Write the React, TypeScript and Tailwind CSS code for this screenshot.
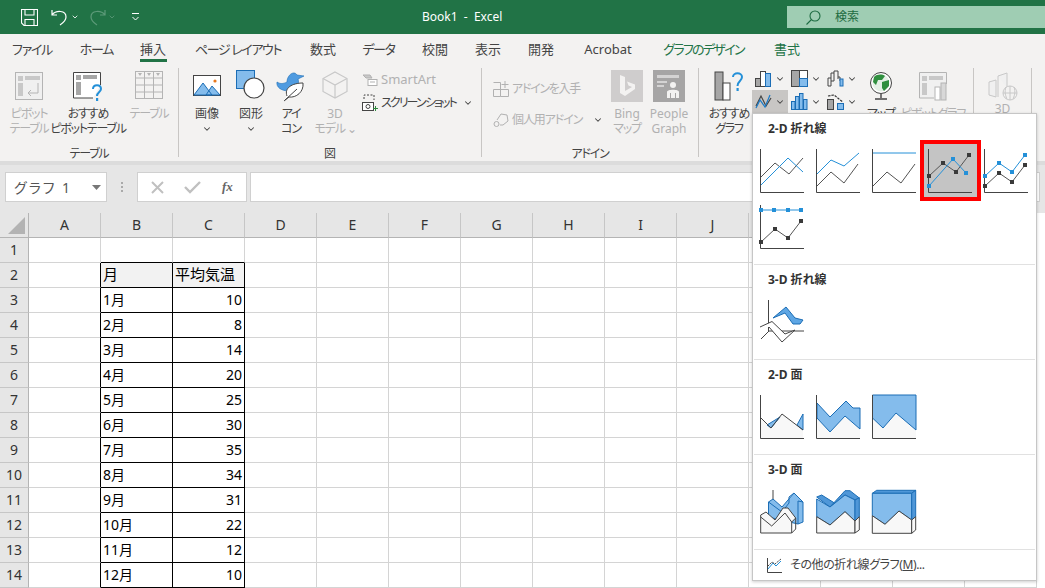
import type { ReactNode } from "react";
import { ChevronDown } from "lucide-react";

const tabs = [
  { label: "ファイル", cls: "w-[64px] text-[#444] tracking-[-1.3px]" },
  { label: "ホーム", cls: "w-[65px] text-[#444] tracking-[-1.3px]" },
  { label: "挿入", cls: "w-[48px] text-[#444]" },
  { label: "ページ レイアウト", cls: "w-[122px] text-[#444] tracking-[-1.4px]" },
  { label: "数式", cls: "w-[48px] text-[#444]" },
  { label: "データ", cls: "w-[63px] text-[#444] tracking-[-1.3px]" },
  { label: "校閲", cls: "w-[50px] text-[#444]" },
  { label: "表示", cls: "w-[56px] text-[#444]" },
  { label: "開発", cls: "w-[50px] text-[#444]" },
  { label: "Acrobat", cls: "w-[84px] text-[#444]" },
  { label: "グラフのデザイン", cls: "w-[107px] text-[#217346] tracking-[-1.7px]" },
  { label: "書式", cls: "w-[60px] text-[#217346]" },
];

const BLUE = "#2490d8";
const DARK = "#444444";
const AREA = "#84bcec";
const EDGE = "#1b6db5";
const LIGHT = "#f8f8f8";

// kana is much narrower in the original UI font
const kana = /[ぁ-んァ-ヶ]/;

function Chev({ className = "" }: { className?: string }) {
  return <ChevronDown size={10} strokeWidth={2.5} className={`shrink-0 ${className}`} />;
}

function Mini({ children, w = 48, h = 48 }: { children: ReactNode; w?: number; h?: number }) {
  return (
    <svg width={w} height={h} viewBox={`0 0 ${w} ${h}`} fill="none" className="block shrink-0">
      {children}
    </svg>
  );
}

function Axis() {
  return <path d="M2.5 2V45.5H46" stroke={DARK} strokeWidth="1" />;
}

function Line({ p, c }: { p: string; c: string }) {
  return <polyline points={p} stroke={c} strokeWidth="1" />;
}

function Marks({ pts, c }: { pts: number[][]; c: string }) {
  return (
    <>
      {pts.map(([x, y]) => (
        <rect key={`${x}-${y}`} x={x - 2} y={y - 2} width="4" height="4" fill={c} />
      ))}
    </>
  );
}

function Poly({ p, fill = AREA, stroke = EDGE }: { p: string; fill?: string; stroke?: string }) {
  return <polygon points={p} fill={fill} stroke={stroke} strokeWidth="1" strokeLinejoin="round" />;
}

const line2d: ReactNode[] = [
  <Mini key="1">
    <Axis />
    <Line p="3,30 17,16 31,27 45,11" c="#555" />
    <Line p="3,38 30,11 45,25" c={BLUE} />
  </Mini>,
  <Mini key="2">
    <Axis />
    <Line p="3,27 17,13 30,19 45,6" c={BLUE} />
    <Line p="3,39 17,25 30,36 44,17" c="#555" />
  </Mini>,
  <Mini key="3">
    <Axis />
    <Line p="3,6 46,6" c={BLUE} />
    <Line p="3,39 17,25 31,36 45,17" c="#555" />
  </Mini>,
  <Mini key="4">
    <Axis />
    <Line p="3,29 17,16 30,25 43,8" c="#555" />
    <Line p="3,39 27,12 40,26" c={BLUE} />
    <Marks pts={[[3, 29], [17, 16], [30, 25], [43, 8]]} c="#3a3a3a" />
    <Marks pts={[[3, 39], [27, 12], [40, 26]]} c={BLUE} />
  </Mini>,
  <Mini key="5">
    <Axis />
    <Line p="3,29 17,16 30,25 43,8" c={BLUE} />
    <Line p="3,39 17,26 30,35 43,18" c="#555" />
    <Marks pts={[[3, 29], [17, 16], [30, 25], [43, 8]]} c={BLUE} />
    <Marks pts={[[3, 39], [17, 26], [30, 35], [43, 18]]} c="#3a3a3a" />
  </Mini>,
  <Mini key="6">
    <Axis />
    <Line p="3,7 43,7" c={BLUE} />
    <Line p="3,39 17,26 30,35 43,18" c="#555" />
    <Marks pts={[[3, 7], [16, 7], [30, 7], [43, 7]]} c={BLUE} />
    <Marks pts={[[3, 39], [17, 26], [30, 35], [43, 18]]} c="#3a3a3a" />
  </Mini>,
];

const line3d: ReactNode[] = [
  <Mini key="1">
    <path d="M10.5 2V33H46" stroke={DARK} strokeWidth="1" />
    <Poly p="15,20 28,9 37,20 45,22 42,26 35,26 27,15" fill="#5ea6e4" />
    <path d="M2 29L14 23.5L27 36L37 32L24 44L11 29" stroke={DARK} strokeWidth="1" fill="#fff" />
    <path d="M3 41L11 33" stroke={DARK} strokeWidth="1" />
  </Mini>,
];

const area2d: ReactNode[] = [
  <Mini key="1">
    <polygon points="3,25 13,35 24,21 45,37 45,45 3,45" fill={LIGHT} />
    <Poly p="9,32 22,24 13,35" />
    <Poly p="39,32 45,21 45,37" />
    <polyline points="3,25 13,35 24,21 45,37" stroke={DARK} strokeWidth="1" />
    <Axis />
  </Mini>,
  <Mini key="2">
    <polygon points="3,25 16,39 31,23 46,36 46,45 3,45" fill={LIGHT} />
    <Poly p="3,10 16,24 32,8 39,15 46,15 46,36 31,23 16,39 3,25" />
    <Axis />
  </Mini>,
  <Mini key="3">
    <polygon points="2.5,25 13,35 26,20 46,37 46,45 2.5,45" fill={LIGHT} />
    <Poly p="2.5,2 46,2 46,37 26,20 13,35 2.5,25" />
    <Axis />
  </Mini>,
];

const area3d: ReactNode[] = [
  <Mini key="1">
    <path d="M15 2V12" stroke={DARK} strokeWidth="1" />
    <Poly p="10.5,14 15,11 24,19 36,5 45,14 45,34 40,36 10.5,29" />
    <path d="M10.5 14L24 24L31 15V9L36 5M40 13V36M40 13L45 14" stroke={EDGE} strokeWidth="1" />
    <polygon points="2.7,27 8,24 17,32 25,20 30,20 37.7,30 33.7,34 33.7,45 2.7,45" fill={LIGHT} stroke={DARK} strokeWidth="1" />
    <path d="M2.7 29L13.7 38L27 25L33.7 34" stroke={DARK} strokeWidth="1" />
    <path d="M33.7 45L37.7 41V30" stroke={DARK} strokeWidth="1" />
  </Mini>,
  <Mini key="2">
    <Poly p="2.7,9 7.7,7 21,15.3 16,19" fill="#4f97d8" />
    <Poly p="31,2.7 36,2.7 45.3,10 41,12 31,7 21,15.3 16,19" fill="#4f97d8" />
    <Poly p="2.7,11 16,19 31,7 41,12 41,33 31,23.7 16,37 2.7,28.7" />
    <Poly p="41,12 45.3,9.7 45.3,28.7 41,33" fill="#4f97d8" />
    <polygon points="2.7,28.7 16,37 31,23.7 41,33 41,45 2.7,45" fill={LIGHT} stroke={DARK} strokeWidth="1" />
    <polygon points="41,33 45.3,28.7 45.3,42 41,45" fill={LIGHT} stroke={DARK} strokeWidth="1" />
  </Mini>,
  <Mini key="3">
    <Poly p="2.3,5.3 6.7,2.3 45.7,2.3 41.7,5.3" fill="#4f97d8" />
    <Poly p="2.3,5.3 41.7,5.3 41.7,32 29,23 15,36.3 2.3,27.7" />
    <Poly p="41.7,5.3 45.7,2.3 45.7,28.7 41.7,32" fill="#4f97d8" />
    <polygon points="2.3,27.7 15,36.3 29,23 41.7,32 41.7,45.3 2.3,45.3" fill={LIGHT} stroke={DARK} strokeWidth="1" />
    <polygon points="41.7,32 45.7,28.7 45.7,42 41.7,45.3" fill={LIGHT} stroke={DARK} strokeWidth="1" />
  </Mini>,
];

function Section({ title, items }: { title: string; items: ReactNode[] }) {
  return (
    <div className="mx-[1px] border-b border-[#e1e1e1] pb-[9px]">
      <div className="h-[29px] pl-[14px] pt-[6px] text-[12px] font-bold leading-[18px] text-[#333]">{title}</div>
      <div className="grid grid-cols-[repeat(5,56px)]">
        {items.map((it, i) => (
          <div key={i} className="relative flex h-[56px] w-[56px] items-center justify-center">
            {title === "2-D 折れ線" && i === 3 && (
              <div className="absolute -left-[2px] -top-[3px] h-[61px] w-[61px] border-[4px] border-[#ff0000] bg-[#c4c4c4]" />
            )}
            <div className="relative">{it}</div>
          </div>
        ))}
      </div>
    </div>
  );
}

function LineDropdown() {
  return (
    <div className="absolute left-[752px] top-[113px] z-10 h-[468px] w-[285px] border border-[#c6c6c6] bg-white shadow-[0_1px_3px_rgba(0,0,0,0.2)]">
      <Section title="2-D 折れ線" items={line2d} />
      <Section title="3-D 折れ線" items={line3d} />
      <Section title="2-D 面" items={area2d} />
      <Section title="3-D 面" items={area3d} />
      <div className="flex h-[30px] items-center gap-[7px] pl-[13px] text-[12px] tracking-[-0.4px] text-[#444]">
        <svg width="17" height="17" viewBox="0 0 17 17" fill="none">
          <path d="M1.5 1V15.5H16" stroke={DARK} />
          <path d="M2 12L7 6L10 9L15 4" stroke={BLUE} />
          <path d="M2 9L6 5L9 7L15 2" stroke={DARK} strokeDasharray="2 1" />
        </svg>
        <span>
          その他の折れ線グラフ(<span className="underline">M</span>)...
        </span>
      </div>
    </div>
  );
}

function Btn({ w, icon, lines, off, chev }: { w: string; icon: ReactNode; lines: string[]; off?: boolean; chev?: boolean }) {
  return (
    <div className={`flex shrink-0 flex-col items-center ${w} ${off ? "text-[#b1b1b1]" : "text-[#444]"}`}>
      <div className="flex h-[35px] items-start justify-center">{icon}</div>
      {lines.map((l) => (
        <span key={l} className={`whitespace-nowrap text-[12px] leading-[15px] ${kana.test(l) ? "tracking-[-1.2px]" : ""}`}>
          {l}
        </span>
      ))}
      {chev && <Chev className="mt-[3px]" />}
    </div>
  );
}

function Divider() {
  return <div className="my-[2px] h-[89px] w-px shrink-0 bg-[#c8c6c4]" />;
}

function Group({ w, label, children }: { w: string; label: string; children: ReactNode }) {
  return (
    <div className={`flex h-[95px] shrink-0 flex-col ${w}`}>
      <div className="flex h-[77px] pt-[5px]">{children}</div>
      <div className={`flex h-[18px] items-center justify-center pt-[3px] text-[12px] text-[#444] ${kana.test(label) ? "tracking-[-1.2px]" : ""}`}>
        {label}
      </div>
    </div>
  );
}

const pivotIcon = (
  <svg width="30" height="30" viewBox="0 0 30 30" fill="none">
    <rect x="1.5" y="1.5" width="27" height="27" fill="#f0f0f0" stroke="#b4b4b4" />
    <rect x="4" y="5" width="5" height="5" fill="#c8c8c8" />
    <rect x="11" y="5" width="15" height="4" fill="#c8c8c8" />
    <rect x="4" y="12" width="5" height="13" fill="#c8c8c8" />
    <path d="M24 12V22H14M17 19L14 22L17 25" stroke="#b4b4b4" />
  </svg>
);
const recPivotIcon = (
  <svg width="32" height="32" viewBox="0 0 32 32" fill="none">
    <path d="M21 27H1.5V1.5H28.5V14" fill="#fff" stroke="#444" />
    <rect x="4" y="4" width="5" height="5" fill="#a6a6a6" />
    <rect x="11" y="4" width="14" height="4" fill="#a6a6a6" />
    <rect x="4" y="11" width="5" height="13" fill="#a6a6a6" />
    <path d="M21 18C21 13 29 13 29 18C29 21 25 21 25 25" stroke="#2490d8" strokeWidth="2" />
    <rect x="24" y="27" width="2.2" height="3" fill="#2490d8" />
  </svg>
);
const tableIcon = (
  <svg width="28" height="28" viewBox="0 0 28 28" fill="none" stroke="#b4b4b4">
    <rect x="0.5" y="0.5" width="27" height="27" />
    <path d="M0 7H28M0 14H28M0 21H28M9.5 0V28M18.5 0V28" />
    <path d="M3 2H7L5 5ZM12 2H16L14 5ZM21 2H25L23 5Z" fill="#b4b4b4" stroke="none" />
  </svg>
);
const pictureIcon = (
  <svg width="28" height="22" viewBox="0 0 28 22" fill="none" className="mt-[4px]">
    <rect x="0.5" y="0.5" width="27" height="20" fill="#fff" stroke="#444" />
    <path d="M1 20L10 8L19 20ZM13 20L19 11L27 20Z" fill="#84bcec" stroke="#1b6db5" />
    <circle cx="22" cy="6" r="1.6" fill="#e8781e" />
  </svg>
);
const shapeIcon = (
  <svg width="30" height="30" viewBox="0 0 30 30" fill="none" className="-mt-[1px]">
    <rect x="0.5" y="0.5" width="18" height="18" fill="#84bcec" stroke="#1b6db5" />
    <circle cx="18" cy="18" r="10" fill="#fff" stroke="#444" strokeWidth="1.2" />
  </svg>
);
const iconIcon = (
  <svg width="30" height="32" viewBox="0 0 30 32" fill="none" className="-mt-[1px]">
    <path d="M1 12C4 14 7 14 11 12C11 5 18 0 21 5L28 6L22 9C24 14 20 20 13 21C5 21 0 17 1 12Z" fill="#4f9be0" stroke="#1b6db5" strokeWidth="0.6" />
    <path d="M11 26C8 18 16 13 27 13C28 22 20 28 13 27L8 31" fill="#fff" stroke="#444" strokeWidth="1" />
    <path d="M9 30L21 19" stroke="#444" />
  </svg>
);
const cubeIcon = (
  <svg width="26" height="28" viewBox="0 0 26 28" fill="none" stroke="#c8c8c8" strokeWidth="1.2">
    <path d="M13 1L25 7.5V20.5L13 27L1 20.5V7.5Z" />
    <path d="M1 7.5L13 14L25 7.5M13 14V27" />
  </svg>
);
const bingIcon = (
  <div className="-mt-[1px] flex h-[32px] w-[32px] items-center justify-center bg-[#cfcdcd]">
    <svg width="18" height="24" viewBox="0 0 18 24" fill="#f3f2f1">
      <path d="M2 1L7 3V17L14 13L10.5 11.5L9 7.5L17 10.5V15L7 22L2 19Z" />
    </svg>
  </div>
);
const peopleIcon = (
  <div className="-mt-[1px] flex h-[32px] w-[32px] items-center justify-center bg-[#a6a5a5]">
    <svg width="26" height="26" viewBox="0 0 26 26" fill="#f3f2f1">
      <rect x="1" y="2" width="22" height="3" opacity="0.6" />
      <rect x="1" y="8" width="10" height="2" opacity="0.6" />
      <rect x="1" y="12" width="7" height="2" opacity="0.6" />
      <circle cx="17" cy="12" r="3" />
      <path d="M11 25V19C11 16 23 16 23 19V25H20V20H19V25H15V20H14V25Z" />
    </svg>
  </div>
);
const recChartIcon = (
  <svg width="30" height="30" viewBox="0 0 30 30" fill="none">
    <rect x="1" y="1" width="8" height="28" fill="#a6a6a6" stroke="#444" />
    <rect x="9" y="12" width="7" height="17" fill="#fff" stroke="#444" />
    <path d="M19 6C19 1 28 1 28 6C28 10 23.5 10 23.5 15" stroke="#2490d8" strokeWidth="2" />
    <rect x="22.5" y="17" width="2.2" height="3" fill="#2490d8" />
  </svg>
);
const globeIcon = (
  <svg width="24" height="30" viewBox="0 0 24 30" fill="none">
    <circle cx="12" cy="12" r="10.5" fill="#fff" stroke="#444" />
    <circle cx="12" cy="12" r="8.5" fill="#e4efe6" />
    <path d="M5 6C8 3 13 3 16 5L13 9L9 9L7 14L4 11ZM13 11L20 9L20 15L15 20L13 17Z" fill="#2f8f3f" />
    <path d="M12 23V27M6 28H18" stroke="#444" strokeWidth="1.4" />
  </svg>
);
const pivotChartIcon = (
  <svg width="30" height="30" viewBox="0 0 30 30" fill="none" stroke="#b4b4b4">
    <path d="M16 27H1.5V1.5H28.5V13" fill="#f0f0f0" />
    <rect x="4" y="5" width="5" height="5" fill="#c8c8c8" stroke="none" />
    <rect x="11" y="5" width="14" height="4" fill="#c8c8c8" stroke="none" />
    <rect x="4" y="12" width="5" height="12" fill="#c8c8c8" stroke="none" />
    <rect x="17" y="16" width="5" height="13" fill="#fff" />
    <rect x="23" y="12" width="5" height="17" fill="#d8d8d8" />
  </svg>
);
const map3dIcon = (
  <svg width="30" height="30" viewBox="0 0 30 30" fill="none" stroke="#c8c8c8">
    <path d="M1 11L8 9V26L1 24ZM10 5L19 2V17M10 5V26" fill="#f0f0f0" />
    <circle cx="22" cy="22" r="7" fill="#f3f2f1" />
    <path d="M15 22H29M22 15V29M18 16C16 21 18 26 19 28M26 16C28 21 26 26 25 28" />
  </svg>
);

function SmallChart({ children }: { children: ReactNode }) {
  return (
    <svg width="17" height="17" viewBox="0 0 17 17" fill="none" className="shrink-0">
      {children}
    </svg>
  );
}

const smallCharts: { key: string; on?: boolean; icon: ReactNode }[] = [
  {
    key: "column",
    icon: (
      <SmallChart>
        <rect x="0.5" y="8.5" width="5" height="8" fill="#a6a6a6" stroke="#444" />
        <rect x="5.5" y="1.5" width="5" height="15" fill="#fff" stroke="#444" />
        <rect x="10.5" y="3.5" width="5" height="13" fill="#84bcec" stroke="#1b6db5" />
      </SmallChart>
    ),
  },
  {
    key: "tree",
    icon: (
      <SmallChart>
        <rect x="0.5" y="0.5" width="8" height="16" fill="#a6a6a6" stroke="#444" />
        <rect x="8.5" y="0.5" width="8" height="8" fill="#fff" stroke="#444" />
        <rect x="8.5" y="8.5" width="8" height="8" fill="#84bcec" stroke="#1b6db5" />
      </SmallChart>
    ),
  },
  {
    key: "water",
    icon: (
      <SmallChart>
        <path d="M1 16V8H4V3H7V1H11V7H13V11" stroke="#444" />
        <path d="M4 8V16H1M7 3V11H4M11 7V9" stroke="#444" />
        <rect x="13" y="9" width="3" height="7" fill="#84bcec" stroke="#1b6db5" />
      </SmallChart>
    ),
  },
  {
    key: "line",
    on: true,
    icon: (
      <SmallChart>
        <path d="M1 13L6 3L11 13L16 5" stroke="#444" strokeWidth="1.2" />
        <path d="M1 15L5 7L10 14L15 2" stroke="#1b7bc8" strokeWidth="1.2" />
      </SmallChart>
    ),
  },
  {
    key: "hist",
    icon: (
      <SmallChart>
        <rect x="0.5" y="8.5" width="3.5" height="8" fill="#84bcec" stroke="#1b6db5" />
        <rect x="4.5" y="3.5" width="3.5" height="13" fill="#84bcec" stroke="#1b6db5" />
        <rect x="8.5" y="0.5" width="3.5" height="16" fill="#84bcec" stroke="#1b6db5" />
        <rect x="12.5" y="6.5" width="3.5" height="10" fill="#84bcec" stroke="#1b6db5" />
      </SmallChart>
    ),
  },
  {
    key: "combo",
    icon: (
      <SmallChart>
        <rect x="0.5" y="6.5" width="6" height="10" fill="#a6a6a6" stroke="#444" />
        <rect x="10.5" y="10.5" width="6" height="6" fill="#84bcec" stroke="#1b6db5" />
        <path d="M1 3L7 2L12 6L16 9" stroke="#333" strokeWidth="1.2" strokeDasharray="2.5 1" />
      </SmallChart>
    ),
  },
];

function Ribbon() {
  return (
    <div className="flex h-[95px] overflow-hidden bg-[#f3f2f1] text-[12px]">
      <Group w="w-[178px]" label="テーブル">
        <div className="flex pl-[4px]">
          <Btn w="w-[50px]" off icon={pivotIcon} lines={["ピボット", "テーブル"]} />
          <Btn w="w-[68px]" icon={recPivotIcon} lines={["おすすめ", "ピボットテーブル"]} />
          <Btn w="w-[54px]" off icon={tableIcon} lines={["テーブル"]} />
        </div>
      </Group>
      <Divider />
      <Group w="w-[302px]" label="図">
        <div className="flex pl-[6px]">
          <Btn w="w-[44px]" icon={pictureIcon} lines={["画像"]} chev />
          <Btn w="w-[44px]" icon={shapeIcon} lines={["図形"]} chev />
          <Btn w="w-[36px]" icon={iconIcon} lines={["アイ", "コン"]} />
          <Btn w="w-[52px]" off icon={cubeIcon} lines={["3D", "モデル ⌄"]} />
          <div className="-mt-[3px] flex flex-col pl-[1px]">
            <div className="flex h-[23px] items-center gap-[3px] text-[#b1b1b1]">
              <svg width="16" height="14" viewBox="0 0 16 14" fill="none" stroke="#b1b1b1" className="shrink-0">
                <path d="M1 2H8L10 5H4Z" fill="#c8c8c8" />
                <rect x="6" y="6.5" width="9" height="6" fill="#fff" />
                <path d="M8 9H13" />
              </svg>
              <span className="text-[13px]">SmartArt</span>
            </div>
            <div className="flex h-[23px] items-center gap-[3px] text-[#444]">
              <svg width="16" height="18" viewBox="0 0 16 18" fill="none" stroke="#444" className="shrink-0">
                <path d="M2 5V1H12V6" strokeDasharray="2 1.5" />
                <rect x="0.5" y="8.5" width="11" height="8" fill="#fff" />
                <circle cx="6" cy="12.5" r="2" />
                <path d="M13.5 12V17M11 14.5H16" stroke="#2e8b3d" />
              </svg>
              <span className="whitespace-nowrap tracking-[-1.9px]">スクリーンショット</span>
              <Chev className="ml-[4px]" />
            </div>
          </div>
        </div>
      </Group>
      <Divider />
      <Group w="w-[216px]" label="アドイン">
        <div className="flex w-[124px] shrink-0 flex-col gap-[9px] pl-[11px] pt-[7px] text-[#b1b1b1]">
          <div className="flex h-[22px] items-center gap-[3px]">
            <svg width="16" height="16" viewBox="0 0 16 16" fill="none" stroke="#b1b1b1" className="shrink-0">
              <path d="M0.5 1.5H7.5V15.5H15.5V8.5H0.5V15.5H7.5" />
              <path d="M12 0V7M8.5 3.5H15.5" />
            </svg>
            <span className="whitespace-nowrap tracking-[-1.3px]">アドインを入手</span>
          </div>
          <div className="flex h-[22px] items-center gap-[3px]">
            <svg width="16" height="16" viewBox="0 0 16 16" fill="none" stroke="#b1b1b1" className="shrink-0">
              <path d="M4 8L8 2L14 3L15 9L10 13H7" />
              <circle cx="3.5" cy="12" r="2.5" />
            </svg>
            <span className="whitespace-nowrap tracking-[-1.1px]">個人用アドイン</span>
            <Chev className="ml-[8px] text-[#444]" />
          </div>
        </div>
        <Btn w="w-[42px]" off icon={bingIcon} lines={["Bing", "マップ"]} />
        <Btn w="w-[42px]" off icon={peopleIcon} lines={["People", "Graph"]} />
      </Group>
      <Divider />
      <Group w="w-[274px]" label="グラフ">
        <Btn w="w-[60px]" icon={recChartIcon} lines={["おすすめ", "グラフ"]} />
        <div className="-ml-[7px] -mt-[4px] grid h-[46px] w-[108px] grid-cols-[repeat(3,36px)] grid-rows-[repeat(2,23px)]">
          {smallCharts.map((c) => (
            <div key={c.key} className={`flex items-center gap-[3px] pl-[3px] text-[#444] ${c.on ? "bg-[#c8c6c4]" : ""}`}>
              {c.icon}
              <Chev />
            </div>
          ))}
        </div>
        <Btn w="w-[42px]" icon={globeIcon} lines={["マップ"]} chev />
        <Btn w="w-[62px]" off icon={pivotChartIcon} lines={["ピボットグラフ"]} chev />
      </Group>
      <Divider />
      <Group w="w-[57px]" label="ツアー">
        <Btn w="w-[57px]" off icon={map3dIcon} lines={["3D", "マップ"]} chev />
      </Group>
      <Divider />
    </div>
  );
}

function FormulaBar() {
  return (
    <div className="flex h-[48px] items-start bg-[#e6e6e6] pl-[5px] pt-[7px] text-[#666]">
      <div className="flex h-[30px] w-[102px] items-center justify-between border border-[#d0d0d0] bg-white pl-[8px] pr-[5px] text-[14px] text-[#555]">
        <span className="tracking-[2px]">グラフ 1</span>
        <svg width="9" height="5" viewBox="0 0 9 5" fill="#777">
          <path d="M0 0H9L4.5 5Z" />
        </svg>
      </div>
      <div className="flex h-[30px] w-[30px] items-center justify-center">
        <span className="flex flex-col gap-[2px]">
          <i className="block h-[2px] w-[2px] bg-[#aaa]" />
          <i className="block h-[2px] w-[2px] bg-[#aaa]" />
          <i className="block h-[2px] w-[2px] bg-[#aaa]" />
        </span>
      </div>
      <div className="flex h-[30px] w-[110px] items-center border border-[#d0d0d0] bg-white">
        <svg width="46" height="16" viewBox="0 0 46 16" fill="none" stroke="#c0c0c0" strokeWidth="2" className="shrink-0">
          <path d="M14 3L25 14M25 3L14 14" />
        </svg>
        <svg width="18" height="16" viewBox="0 0 18 16" fill="none" stroke="#c0c0c0" strokeWidth="2.4" className="shrink-0">
          <path d="M1 8L6 13L16 3" />
        </svg>
        <span className="ml-[20px] font-['Liberation_Serif',serif] text-[13px] font-bold italic text-[#666]">fx</span>
      </div>
      <div className="ml-[3px] h-[30px] w-[790px] border border-[#d0d0d0] bg-white" />
    </div>
  );
}

const columns = ["A", "B", "C", "D", "E", "F", "G", "H", "I", "J", "K", "L", "M", "N"];
const temps = [
  ["1月", "10"],
  ["2月", "8"],
  ["3月", "14"],
  ["4月", "20"],
  ["5月", "25"],
  ["6月", "30"],
  ["7月", "35"],
  ["8月", "34"],
  ["9月", "31"],
  ["10月", "22"],
  ["11月", "12"],
  ["12月", "10"],
];

function Cell({ row, col }: { row: number; col: number }) {
  const inTable = row >= 2 && (col === 1 || col === 2);
  const beforeTable = row >= 2 && col === 0;
  const aboveTable = row === 1 && (col === 1 || col === 2);
  const right = inTable || beforeTable ? "border-r-black" : "border-r-[#d4d4d4]";
  const bottom = inTable || aboveTable ? "border-b-black" : "border-b-[#d4d4d4]";
  let text = "";
  if (row === 2 && col === 1) text = "月";
  if (row === 2 && col === 2) text = "平均気温";
  const rec = temps[row - 3];
  if (rec && col === 1) text = rec[0];
  if (rec && col === 2) text = rec[1];
  const isNumber = row > 2 && col === 2;
  return (
    <div
      className={`h-[25px] overflow-hidden whitespace-nowrap border-b border-r px-[2px] leading-[23px] text-black ${right} ${bottom} ${
        isNumber ? "text-right" : ""
      } ${row === 2 ? "text-[15px]" : "text-[14px]"} ${row === 2 && inTable ? "bg-[#f2f2f2]" : ""}`}
    >
      {text}
    </div>
  );
}

function Sheet() {
  return (
    <div className="grid grid-cols-[29px_repeat(14,72px)]">
      <div className="flex h-[25px] items-end justify-end border-b border-r border-[#b4b4b4] bg-[#e6e6e6] pb-[3px] pr-[3px]">
        <svg width="17" height="17" viewBox="0 0 17 17" fill="#b3b3b3">
          <path d="M17 0V17H0Z" />
        </svg>
      </div>
      {columns.map((c) => (
        <div key={c} className="h-[25px] border-b border-r border-b-[#b4b4b4] border-r-[#c6c6c6] bg-[#e6e6e6] text-center text-[14px] leading-[24px] text-[#333]">
          {c}
        </div>
      ))}
      {Array.from({ length: 14 }, (_, i) => i + 1).map((row) => (
        <div key={row} className="contents">
          <div className="h-[25px] border-b border-r border-b-[#c6c6c6] border-r-[#b4b4b4] bg-[#e6e6e6] text-center text-[14px] leading-[24px] text-[#333]">
            {row}
          </div>
          {columns.map((_, col) => (
            <Cell key={col} row={row} col={col} />
          ))}
        </div>
      ))}
    </div>
  );
}

export default function App() {
  return (
    <div className="relative h-[588px] w-[1045px] overflow-hidden bg-white font-['Noto_Sans','Noto_Sans_CJK_JP',sans-serif] [font-feature-settings:'palt']">
      <div className="flex h-[34px] items-center bg-[#217346] text-white">
        <div className="flex w-[320px] items-center pl-[21px]">
          <svg width="17" height="17" viewBox="0 0 17 17" fill="none" stroke="#fff" strokeWidth="1.1">
            <path d="M0.5 0.5H16.5V16.5H3L0.5 14Z" />
            <path d="M4 0.5V6H13V0.5M4 16.5V10.5H13V16.5" />
          </svg>
          <svg width="18" height="18" viewBox="0 0 18 18" fill="none" stroke="#fff" strokeWidth="1.2" className="ml-[13px]">
            <path d="M1 2V7H6M1 7C5 2 15 2 15 9C15 12 12 15 9 17" />
          </svg>
          <Chev className="ml-[2px] h-[8px] w-[8px]" />
          <svg width="18" height="18" viewBox="0 0 18 18" fill="none" stroke="#5d9a79" strokeWidth="1.2" className="ml-[9px]">
            <path d="M17 2V7H12M17 7C13 2 3 2 3 9C3 12 6 15 9 17" />
          </svg>
          <Chev className="ml-[2px] h-[8px] w-[8px] text-[#5d9a79]" />
          <svg width="10" height="10" viewBox="0 0 10 10" fill="none" stroke="#fff" className="ml-[15px]">
            <path d="M1 1.5H8M1.5 5L4.5 8L7.5 5" />
          </svg>
        </div>
        <div className="w-[467px] whitespace-pre pl-[102px] text-[12px]">Book1  -  Excel</div>
        <div className="flex h-[22px] flex-1 items-center bg-[#9fcdb3] pl-[19px] text-[#1d6b41]">
          <svg width="15" height="15" viewBox="0 0 15 15" fill="none" stroke="#1d6b41" strokeWidth="1.1">
            <circle cx="9" cy="6" r="5" />
            <path d="M5.5 9.5L0.5 14.5" />
          </svg>
          <span className="ml-[14px] text-[12px]">検索</span>
        </div>
      </div>
      <div className="flex h-[32px] items-center bg-[#f3f2f1] text-[13px]">
        {tabs.map((t) => (
          <div key={t.label} className={`relative flex h-[32px] shrink-0 items-center justify-center whitespace-nowrap ${t.cls}`}>
            {t.label}
            {t.label === "挿入" && <span className="absolute bottom-[4px] left-[11px] h-[3px] w-[27px] bg-[#217346]" />}
          </div>
        ))}
      </div>
      <Ribbon />
      <div className="h-[4px] bg-[#dcdcdc]" />
      <FormulaBar />
      <Sheet />
      <LineDropdown />
    </div>
  );
}
